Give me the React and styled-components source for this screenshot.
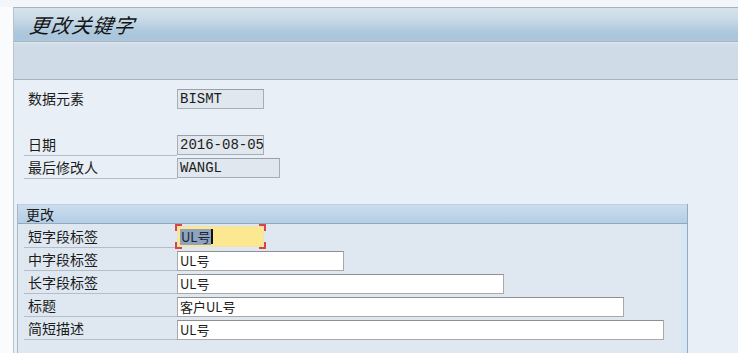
import React from 'react';
import styled, { createGlobalStyle, css } from 'styled-components';

const GlobalStyle = createGlobalStyle`
  html, body { margin: 0; padding: 0; }
  body {
    background: #f2f6fa;
    font-family: "Noto Sans CJK SC", "Noto Sans", sans-serif;
    overflow: hidden;
    color: #1b1b1b;
  }
`;

const Page = styled.div`
  display: flex;
  flex-direction: column;
  width: 738px;
  height: 353px;
  overflow: hidden;
`;

const TopStrip = styled.div`
  flex: none;
  height: 7px;
  background: #f2f6fa;
`;

const Body = styled.div`
  flex: 1;
  display: flex;
  min-height: 0;
`;

const Gutter = styled.div`
  flex: none;
  width: 13px;
  background: #f9fbfc;
`;

const Main = styled.div`
  flex: 1;
  display: flex;
  flex-direction: column;
  border-left: 1px solid #b7c3ce;
  border-top: 1px solid #a7b4bf;
  background: #e9eff6;
  min-width: 0;
`;

const TitleBar = styled.div`
  flex: none;
  height: 33px;
  border-bottom: 1px solid #a3b4c2;
  background: linear-gradient(#d7e3ec 0%, #c9dae7 35%, #aec9de 70%, #a9c5dc 90%, #b3c6d5 100%);
  display: flex;
  align-items: center;
  padding-left: 16px;
`;

const Title = styled.h1`
  margin: 0;
  font-size: 20px;
  font-weight: normal;
  font-style: italic;
  letter-spacing: 1px;
  color: #141414;
  transform: skewX(-8deg);
`;

const Toolbar = styled.div`
  flex: none;
  height: 37px;
  border-top: 1px solid #dde8f1;
  border-bottom: 1px solid #a3b4c3;
  box-sizing: border-box;
  height: 38px;
  background: linear-gradient(#d3e0eb 0, #cfdce8 4px, #cfdce8 100%);
`;

const Content = styled.div`
  flex: 1;
  display: flex;
  flex-direction: column;
  padding-top: 7px;
  min-height: 0;
`;

const Fields = styled.div`
  display: flex;
  flex-direction: column;
  padding-left: 10px;
`;

const Row = styled.div`
  display: flex;
  align-items: flex-end;
  height: 23px;
`;

const Label = styled.div`
  flex: none;
  box-sizing: border-box;
  width: 153px;
  height: 23px;
  padding-left: 4px;
  font-size: 14px;
  line-height: 22px;
  color: #1b1b1b;
  border-bottom: 1px solid ${p => (p.$underline ? '#b3bec9' : 'transparent')};
`;

const DisplayBox = styled.div`
  box-sizing: border-box;
  width: ${p => p.$w}px;
  height: 20px;
  margin-bottom: 1px;
  padding-left: 2px;
  border: 1px solid #a5aeb7;
  border-top-color: #98a1aa;
  background: #e0e7ee;
  font-family: "Liberation Mono", "DejaVu Sans Mono", monospace;
  font-size: 14px;
  line-height: 18px;
  color: #1b1b1b;
  white-space: nowrap;
`;

const Group = styled.div`
  flex: 1;
  display: flex;
  flex-direction: column;
  margin: 25px 0 0 3px;
  width: 671px;
  box-sizing: border-box;
  border-left: 1px solid #aab7c3;
  border-right: 1px solid #93a9bf;
  background: #dfe8f1;
`;

const GroupHeader = styled.div`
  box-sizing: border-box;
  height: 20px;
  padding-left: 8px;
  border-top: 1px solid #bcd1e3;
  border-bottom: 1px solid #8eaac3;
  background: linear-gradient(#cbdded, #b4cee5);
  font-size: 14px;
  line-height: 18px;
`;

const GroupBody = styled.div`
  flex: 1;
  padding: 1px 0 0 6px;
  box-shadow: inset -6px 0 0 #d8e5f2;
`;

const InputBox = styled.div`
  position: relative;
  box-sizing: border-box;
  width: ${p => p.$w}px;
  height: 20px;
  padding-left: 2px;
  border: 1px solid #a9a9a9;
  border-top-color: #8f8f8f;
  background: #ffffff;
  font-size: 13px;
  line-height: 18px;
  color: #1b1b1b;
  white-space: nowrap;
  display: flex;
  align-items: center;
  ${p =>
    p.$focused &&
    css`
      height: 21px;
      margin-bottom: 1px;
      border-color: #f3e3a8;
      background: #fde892;
    `}
`;

const Selected = styled.span`
  background: #8fa3bd;
  color: #18243a;
  line-height: 16px;
  padding: 0 1px;
`;

const Caret = styled.span`
  display: inline-block;
  width: 2px;
  height: 15px;
  background: #111;
`;

const Corner = styled.span`
  position: absolute;
  width: 5px;
  height: 5px;
  border-color: #d9434a;
  border-style: solid;
  border-width: 0;
  ${p => p.$pos.includes('t') && css`top: -3px; border-top-width: 2px;`}
  ${p => p.$pos.includes('b') && css`bottom: -3px; border-bottom-width: 2px;`}
  ${p => p.$pos.includes('l') && css`left: -3px; border-left-width: 2px;`}
  ${p => p.$pos.includes('r') && css`right: -3px; border-right-width: 2px;`}
`;

const groupRows = [
  { label: '短字段标签', value: 'UL号', w: 87, focused: true },
  { label: '中字段标签', value: 'UL号', w: 167 },
  { label: '长字段标签', value: 'UL号', w: 327 },
  { label: '标题', value: '客户UL号', w: 447 },
  { label: '简短描述', value: 'UL号', w: 487 },
];

export default function App() {
  return (
    <>
      <GlobalStyle />
      <Page>
        <TopStrip />
        <Body>
          <Gutter />
          <Main>
            <TitleBar>
              <Title>更改关键字</Title>
            </TitleBar>
            <Toolbar />
            <Content>
              <Fields>
                <Row>
                  <Label>数据元素</Label>
                  <DisplayBox $w={87}>BISMT</DisplayBox>
                </Row>
                <Row />
                <Row>
                  <Label $underline>日期</Label>
                  <DisplayBox $w={87}>2016-08-05</DisplayBox>
                </Row>
                <Row>
                  <Label $underline>最后修改人</Label>
                  <DisplayBox $w={103}>WANGL</DisplayBox>
                </Row>
              </Fields>
              <Group>
                <GroupHeader>更改</GroupHeader>
                <GroupBody>
                  {groupRows.map(r => (
                    <Row key={r.label}>
                      <Label $underline>{r.label}</Label>
                      <InputBox $w={r.w} $focused={r.focused}>
                        {r.focused ? (
                          <>
                            <Selected>{r.value}</Selected>
                            <Caret />
                            <Corner $pos="tl" />
                            <Corner $pos="tr" />
                            <Corner $pos="bl" />
                            <Corner $pos="br" />
                          </>
                        ) : (
                          r.value
                        )}
                      </InputBox>
                    </Row>
                  ))}
                </GroupBody>
              </Group>
            </Content>
          </Main>
        </Body>
      </Page>
    </>
  );
}
